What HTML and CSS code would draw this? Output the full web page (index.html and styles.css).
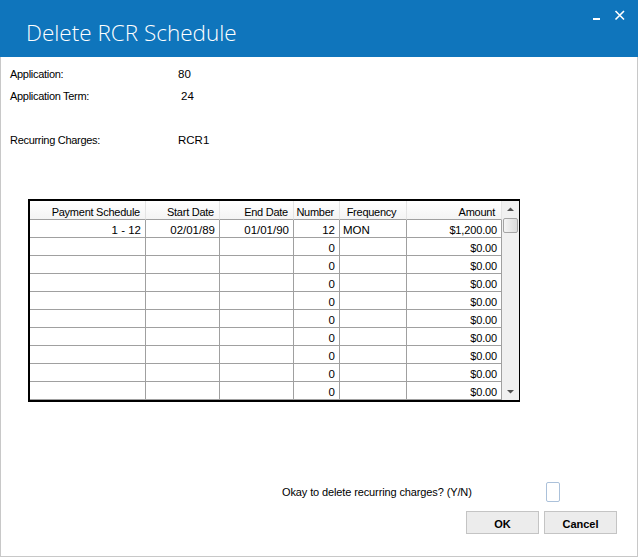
FILE: index.html
```html
<!DOCTYPE html>
<html>
	<head>
		<meta charset="utf-8">
		<link rel="stylesheet" href="styles.css">
		<title>Delete RCR Schedule</title>
	</head>
	<body>
		<div class="window">
			<div class="titlebar">
				<h1>Delete RCR Schedule</h1>
				<div class="window-buttons">
					<svg width="9" height="11" viewBox="0 0 9 11"><rect x="1" y="8" width="7" height="2" fill="#fff"/></svg>
					<svg width="11" height="11" viewBox="0 0 11 11"><path d="M1.500 1l8.500 8.500M10 1l-8.500 8.500" stroke="#fff" stroke-width="1.600" fill="none"/></svg>
				</div>
			</div>

			<div class="content">
				<dl class="info">
					<dt>Application:</dt><dd>80</dd>
					<dt>Application Term:</dt><dd class="shift">24</dd>
					<dt class="gap">Recurring Charges:</dt><dd class="gap">RCR1</dd>
				</dl>

				<div class="grid">
					<div class="grid-rows">
						<table>
							<colgroup>
								<col class="c1"><col class="c2"><col class="c3"><col class="c4"><col class="c5"><col class="c6">
							</colgroup>
							<thead>
								<tr><th>Payment Schedule</th><th>Start Date</th><th>End Date</th><th>Number</th><th class="center">Frequency</th><th class="amount-head">Amount</th></tr>
							</thead>
							<tbody>
								<tr><td>1 - 12</td><td>02/01/89</td><td>01/01/90</td><td>12</td><td class="left">MON</td><td class="amount">$1,200.00</td></tr>
								<tr><td></td><td></td><td></td><td>0</td><td></td><td class="amount">$0.00</td></tr>
								<tr><td></td><td></td><td></td><td>0</td><td></td><td class="amount">$0.00</td></tr>
								<tr><td></td><td></td><td></td><td>0</td><td></td><td class="amount">$0.00</td></tr>
								<tr><td></td><td></td><td></td><td>0</td><td></td><td class="amount">$0.00</td></tr>
								<tr><td></td><td></td><td></td><td>0</td><td></td><td class="amount">$0.00</td></tr>
								<tr><td></td><td></td><td></td><td>0</td><td></td><td class="amount">$0.00</td></tr>
								<tr><td></td><td></td><td></td><td>0</td><td></td><td class="amount">$0.00</td></tr>
								<tr><td></td><td></td><td></td><td>0</td><td></td><td class="amount">$0.00</td></tr>
								<tr><td></td><td></td><td></td><td>0</td><td></td><td class="amount">$0.00</td></tr>
							</tbody>
						</table>
					</div>
					<div class="scrollbar">
						<svg width="17" height="17" viewBox="0 0 17 17"><path d="M5 10l3.500-3.500L12 10z" fill="#505050"/></svg>
						<div class="thumb"></div>
						<div class="track"></div>
						<svg width="17" height="17" viewBox="0 0 17 17"><path d="M5 7l3.500 3.500L12 7z" fill="#505050"/></svg>
					</div>
				</div>

				<div class="confirm">
					<label>Okay to delete recurring charges? (Y/N)</label>
					<div class="yn"></div>
				</div>

				<div class="actions">
					<button>OK</button>
					<button>Cancel</button>
				</div>
			</div>
		</div>
	</body>
</html>
```

FILE: styles.css
```css
html, body {
  margin: 0;
  padding: 0;
  width: 638px;
  height: 557px;
  overflow: hidden;
  background: #fff;
  font-family: "Liberation Sans", Arial, sans-serif;
  font-size: 11px;
  color: #000;
}

.window {
  box-sizing: border-box;
  width: 638px;
  height: 557px;
  display: flex;
  flex-direction: column;
  border: 1px solid #c8c8c8;
  border-top: 0;
}

.titlebar {
  height: 57px;
  margin: 0 -1px;
  background: #0f75bc;
  display: flex;
  justify-content: space-between;
}

.titlebar h1 {
  margin: 0;
  padding: 18px 0 0 26px;
  font-family: "Open Sans", sans-serif;
  font-weight: 300;
  font-size: 22.5px;
  line-height: 30px;
  color: #fff;
}

.window-buttons {
  display: flex;
  align-items: flex-start;
  gap: 13px;
  padding: 10px 13px 0 0;
}

.content {
  flex: 1;
  display: flex;
  flex-direction: column;
  padding: 0 20px 0 9px;
}

.info {
  margin: 6px 0 0;
  display: grid;
  grid-template-columns: 168px auto;
  grid-auto-rows: 22px;
  align-items: center;
  letter-spacing: -0.3px;
}

.info dt, .info dd {
  margin: 0;
}

.info dd {
  font-size: 11.5px;
  letter-spacing: 0;
}

.info .shift {
  padding-left: 3px;
}

.info .gap {
  margin-top: 44px;
}

.grid {
  width: 492px;
  box-sizing: border-box;
  height: 203px;
  margin: 70px 0 0 18px;
  border: 2px solid #000;
  display: flex;
}

.grid-rows {
  width: 472px;
}

table {
  table-layout: fixed;
  width: 472px;
  border-collapse: separate;
  border-spacing: 0;
}

.c1 { width: 116px; }
.c2, .c3 { width: 74px; }
.c4 { width: 46px; }
.c5 { width: 67px; }
.c6 { width: 95px; }

th, td {
  box-sizing: border-box;
  height: 18px;
  padding: 2px 4px 0 2px;
  text-align: right;
  font-size: 11.5px;
  font-weight: normal;
  border-right: 1px solid #a0a0a0;
  border-bottom: 1px solid #a0a0a0;
  white-space: nowrap;
  overflow: hidden;
}

th {
  height: 19px;
  padding: 4px 5px 0 2px;
  font-size: 11px;
  letter-spacing: -0.25px;
  border-right-color: #e4e4e4;
  border-bottom-color: #a0a0a0;
  background: linear-gradient(#fff, #f4f4f4);
}

th.center {
  text-align: center;
}

th.amount-head {
  padding-right: 6px;
}

td.left {
  text-align: left;
  padding-left: 3px;
}

td.amount {
  font-size: 11px;
  letter-spacing: -0.15px;
}

.scrollbar {
  width: 18px;
  display: flex;
  flex-direction: column;
  background: #f0f0f0;
}

.scrollbar svg {
  display: block;
  flex: none;
}

.thumb {
  height: 15px;
  margin: 0 1px 0 1px;
  box-sizing: border-box;
  border: 1px solid #a4a4a4;
  border-radius: 2px;
  background: linear-gradient(to right, #f4f4f4, #dcdcdc);
}

.track {
  flex: 1;
}

.confirm {
  margin-top: 80px;
  display: flex;
  align-items: center;
  height: 20px;
}

.confirm label {
  margin-left: 272px;
  width: 264px;
  letter-spacing: -0.12px;
}

.yn {
  width: 14px;
  height: 20px;
  box-sizing: border-box;
  border: 1px solid #abc1da;
  border-radius: 2px;
}

.actions {
  margin-top: 9px;
  display: flex;
  justify-content: flex-end;
  gap: 5px;
}

button {
  width: 73px;
  height: 23px;
  padding: 2px 0 0;
  box-sizing: border-box;
  border: 1px solid #c4c4c4;
  background: #ececec;
  font-family: "Liberation Sans", Arial, sans-serif;
  font-size: 11px;
  font-weight: bold;
  color: #000;
}
```
